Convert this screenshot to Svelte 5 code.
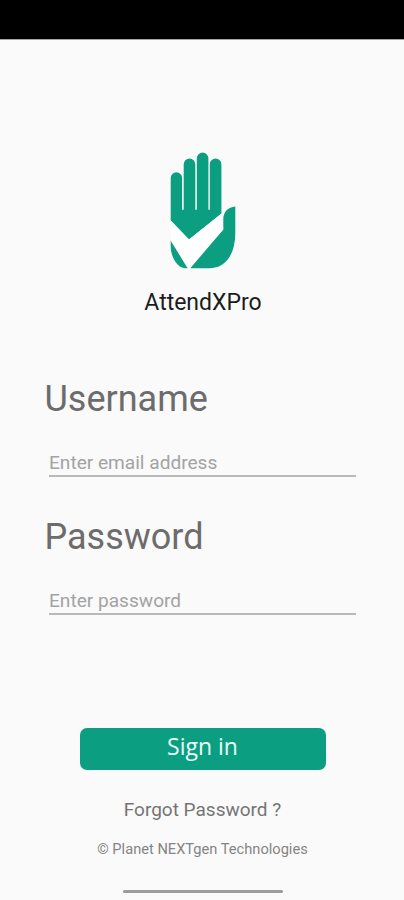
<script>
  let username = $state('');
  let password = $state('');
</script>

<div class="screen">
  <div class="status"></div>
  <main>
    <svg class="logo" viewBox="0 0 66 118" aria-hidden="true">
      <g fill="#0b9e81">
        <path d="M.7 68.5V26a5.7 5.7 0 0 1 11.4 0v31.8h1.6V12.3a5.8 5.8 0 0 1 11.6 0v45.5h1.5V6.4a5.8 5.8 0 0 1 11.6 0v51.4h1.4V12.3a5.8 5.8 0 0 1 11.6 0V61.4L19 87.4z" />
        <path d="M.7 88.6 17.6 116.3H15C7 115.5.7 105 .7 94z" />
        <path d="M53.3 77.5V67c0-7 5-12 12-12.5V81c0 21-9.5 35.3-26.3 35.3H20.3z" />
      </g>
      <path d="M.7 68.5 19 87.4 51.6 61.4 53.3 77.5 19 116.3.7 88.6z" fill="#fff" />
    </svg>
    <h1>AttendXPro</h1>
    <form onsubmit={(e) => e.preventDefault()}>
      <div class="field">
        <label for="username">Username</label>
        <input id="username" type="text" placeholder="Enter email address" bind:value={username} />
      </div>
      <div class="field">
        <label for="password">Password</label>
        <input id="password" type="password" placeholder="Enter password" bind:value={password} />
      </div>
      <button type="submit">Sign in</button>
    </form>
    <a class="forgot" href="#forgot">Forgot Password ?</a>
    <footer>© Planet NEXTgen Technologies</footer>
  </main>
  <div class="home"></div>
</div>

<style>
  :global(body) { margin: 0; background: #fafafa; }
  .screen {
    width: 404px;
    height: 900px;
    box-sizing: border-box;
    display: flex;
    flex-direction: column;
    align-items: center;
    background: #fafafa;
    font-family: Roboto, sans-serif;
    overflow: hidden;
  }
  .status {
    width: 100%;
    height: 40px;
    flex: none;
    box-sizing: border-box;
    background: #000;
    border-bottom: 1px solid #a5a5a5;
  }
  main { display: flex; flex-direction: column; align-items: center; width: 100%; }
  .logo { width: 66px; height: 118px; margin-top: 112px; margin-left: 2px; }
  h1 {
    margin: 19px 0 0 2px;
    font-size: 23px;
    line-height: 28px;
    font-weight: 400;
    color: #1c1c1c;
  }
  form { width: 100%; margin-top: 60px; display: flex; flex-direction: column; align-items: center; }
  .field {
    width: 100%;
    height: 138px;
    box-sizing: border-box;
    padding: 0 48px 0 43px;
    display: flex;
    flex-direction: column;
  }
  label { padding-left: 1.5px; font-size: 36px; line-height: 44px; color: #6c6c6c; white-space: nowrap; }
  input {
    margin: 29px 0 0 6px;
    padding: 0;
    height: 27px;
    box-sizing: border-box;
    border: 0;
    border-bottom: 2px solid #b9b9b9;
    border-radius: 0;
    outline: 0;
    background: transparent;
    font: 400 19.1px/24px Roboto, sans-serif;
    color: #444;
  }
  input::placeholder { color: #a3a3a3; opacity: 1; }
  button {
    width: 246px;
    height: 42px;
    margin: 75px 0 0 2px;
    padding: 0 1px 6px 0;
    border: 0;
    border-radius: 7px;
    background: #0b9e81;
    color: #ecfffa;
    font: 400 23px/36px "Open Sans", sans-serif;
  }
  .forgot {
    margin: 28px 0 0 1px;
    font-size: 19px;
    line-height: 24px;
    color: #757575;
    text-decoration: none;
  }
  footer { margin: 17px 0 0 1px; font-size: 14.65px; line-height: 20px; color: #858585; }
  .home { width: 160px; height: 3px; margin: 31px 0 0 2px; border-radius: 2px; background: #9c9c9c; }
</style>
